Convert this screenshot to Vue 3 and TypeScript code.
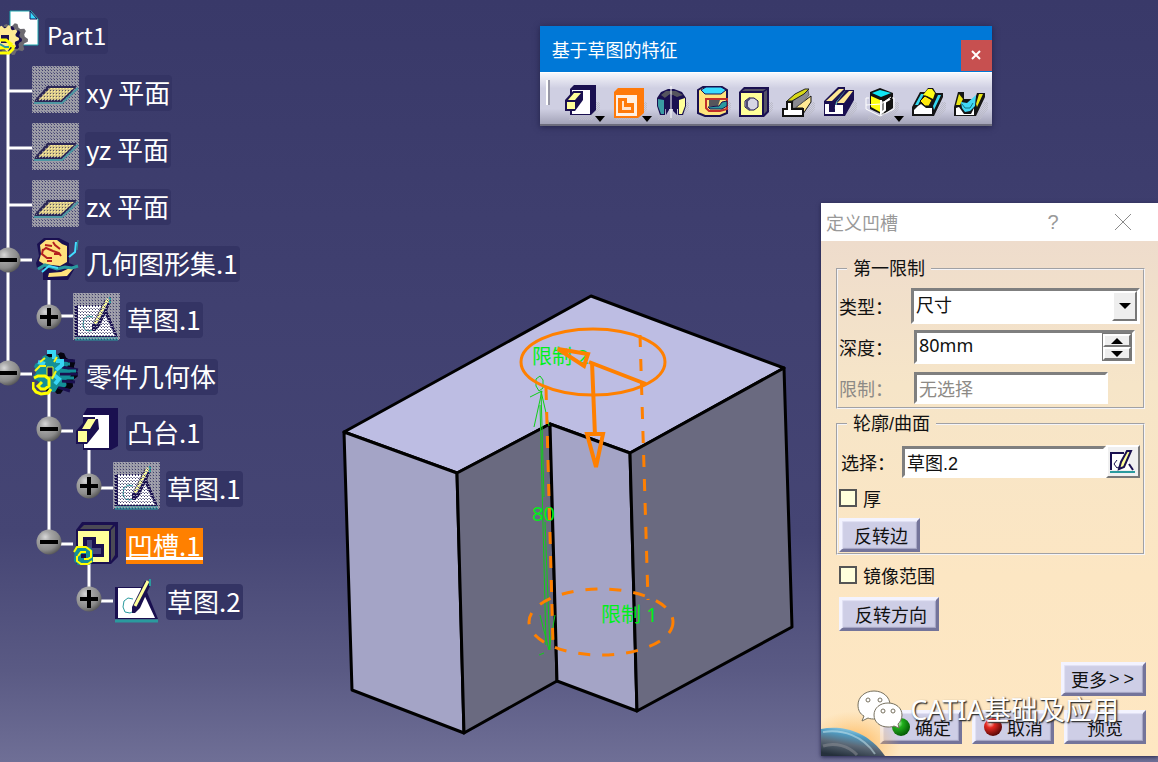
<script setup lang="ts">
import { ref } from 'vue'

interface Shape {
  d: string
  f?: string
  s?: string
  w?: number
}
interface TreeRow {
  label: string
  icon: string
  level: number
  toggle?: 'plus' | 'minus'
  selected?: boolean
  root?: boolean
}
interface Tool {
  name: string
  icon: string
  menu?: boolean
}

const navy = '#1a1050'
const lemon = '#ffff99'
const teal = '#2a9a9e'

const gear = (cx: number, cy: number, outer: number, inner: number, teeth: number): string => {
  const pts: string[] = []
  for (let i = 0; i < teeth * 4; i++) {
    const a = (i / (teeth * 4)) * Math.PI * 2
    const r = i % 4 < 2 ? outer : inner
    pts.push(`${(cx + Math.cos(a) * r).toFixed(1)} ${(cy + Math.sin(a) * r).toFixed(1)}`)
  }
  return `M${pts.join('L')}Z`
}

const plane: Shape[] = [
  { d: 'M0 0H47V47H0Z', f: 'url(#mesh)' },
  { d: 'M3 34L15 20H45L31 37H2Z', f: 'url(#dusk)' },
  { d: 'M6 34H29L42 22H18Z', f: 'url(#sand)' },
  { d: 'M2 37H30L46 22', s: '#4d97a3', w: 2 },
]
const sketch: Shape[] = [
  { d: 'M2 12H32L45 44H2Z', f: navy },
  { d: 'M5 13H28L42 43H5Z', f: '#fff' },
  { d: 'M2 46H45', s: teal, w: 3 },
  { d: 'M20 24L15 23L11 26L10 32L12 37L17 38L21 36', s: teal, w: 1 },
  { d: 'M32 6H37V11L27 33L22 38H19V32Z', f: navy },
  { d: 'M35 6L22 31', s: lemon, w: 3 },
  { d: 'M37 4V11', s: teal, w: 2 },
]

const treeIcons: Record<string, Shape[]> = {
  part: [
    { d: 'M10 2H31L38 10V36H10Z', f: '#fff', s: '#1aa5ad', w: 1 },
    { d: 'M30 2L37 10H30Z', f: '#35dcff', s: navy, w: 1 },
    { d: gear(12, 30, 16, 13, 9), f: '#6c6a70' },
    { d: gear(9, 30, 13, 11, 9), f: navy },
    { d: gear(6, 29, 13, 10, 9), f: '#ffe994' },
    { d: 'M1 26H9V34H1Z', f: navy },
    { d: 'M-2 31H6L11 35L8 39H-2M0 44H9L13 40V36', s: '#ffff00', w: 3 },
    { d: 'M0 35L5 38H9', s: teal, w: 2 },
  ],
  plane,
  set: [
    { d: 'M5 8L12 2H27L37 7L37 27L44 30L36 44H11V32H5L4 27L7 20Z', f: navy },
    { d: 'M8 9L14 4H25L30 8L35 10V26L28 30L12 28L7 25L9 18Z', f: '#ffe17c' },
    { d: 'M10 15L14 12L21 15L27 17L29 20M21 6L23 9L28 13M11 13L10 18L15 22H20M22 18H28M13 9L20 10M15 25H20', s: '#b32020', w: 2 },
    { d: 'M16 41L17 37L29 36L40 31L41 33L35 40Z', f: '#ffe17c' },
    { d: 'M6 33L13 29L25 33L33 31L40 32L46 30', s: teal, w: 3 },
    { d: 'M10 36L17 30L26 32M44 6L43 16L37 21', s: '#42dcff', w: 2 },
    { d: 'M46 4L45 14', s: teal, w: 1 },
  ],
  body: [
    { d: gear(25, 24, 21, 18, 9), f: '#050510' },
    { d: gear(20, 24, 19, 16, 9), f: '#138f98' },
    { d: 'M30 11L43 12M30 18L46 21M30 32L43 33M26 38L38 42M28 25H46', s: navy, w: 3 },
    { d: 'M27 15H38M28 22H44M27 29H42M24 36H34', s: '#138f98', w: 3 },
    { d: 'M15 3H22V10M6 13L13 15M24 12H30V16L24 21M22 26L27 30L23 35', s: '#39d5f5', w: 4 },
    { d: 'M15 18H21V28H15Z', f: navy, s: '#eaf21a', w: 1 },
    { d: 'M8 13L13 9M25 8L22 13M3 22L8 17H14M24 22L20 30', s: '#f5f51b', w: 2 },
    { d: 'M2 29L6 27H13L17 30V37L13 40H9L6 37L10 33M1 33V39L4 43L9 45L16 44L19 40', s: '#ffff00', w: 3 },
  ],
  pad: [
    { d: 'M10 10L14 3H45V41L38 45H10V39H3V26L10 18Z', f: navy },
    { d: 'M10 10H36V43H11V35L22 24V12H10Z', f: '#fff' },
    { d: 'M8 26L15 14H25L26 24L14 39H3V26Z', f: navy },
    { d: 'M9 24L15 14H23L17 24Z', f: lemon },
    { d: 'M5 26H14V37H5Z', f: lemon },
  ],
  pocket: [
    { d: 'M3 12L9 4H45V39L38 46H3Z', f: navy },
    { d: 'M7 11L11 7H40L37 11ZM38 12L42 8V37L38 43Z', f: '#4b4a55' },
    { d: 'M5 13H36V44H5Z', f: lemon },
    { d: 'M10 19H23V26H31V39H10Z', f: navy },
    { d: 'M14 22H19V30H28V36H14Z', f: '#47477a' },
    { d: 'M2 29H17L20 33V44L16 47H5L1 43Z', f: '#138f98' },
    { d: 'M8 36H13V40H8Z', f: navy },
    { d: 'M1 34L4 29H13L18 33V39L15 41H11M4 38V43L8 46H15L19 43M5 38L8 34H13', s: '#ffff00', w: 2 },
  ],
  sketch,
  ghost: [{ d: 'M0 0H47V47H0Z', f: 'url(#mesh)' }, ...sketch, { d: 'M0 0H47V47H0Z', f: 'url(#veil)' }],
}

const toolIcons: Record<string, Shape[]> = {
  pad: [
    { d: 'M10 9L14 5H36V30L31 35H10Z', f: navy },
    { d: 'M12 10H30V34H12Z', f: '#fff' },
    { d: 'M5 20L13 11H23V20L15 31H5Z', f: navy },
    { d: 'M8 20L14 13H21L15 20Z', f: lemon },
    { d: 'M7 22H15V29H7Z', f: lemon },
  ],
  pocket: [
    { d: 'M7 12L11 8H37V33L31 38H7Z', f: '#ff7a0a' },
    { d: 'M9 15H30V36H9Z', f: '#fff0e4' },
    { d: 'M11 18H20V23H27V33H11Z', f: '#ff7a0a' },
    { d: 'M15 21H17V27H24V30H15Z', f: '#ffe4cf' },
  ],
  shaft: [
    { d: 'M8 18L12 12L19 9H25L33 12L37 18V26L34 35H29V29H16V35H11L8 26Z', f: navy },
    { d: 'M12 15L17 11H27L34 15L28 17L21 14L16 18Z', f: '#55545e' },
    { d: 'M9 19L15 20V34H12L9 26Z', f: '#3a9ba3' },
    { d: 'M30 20L36 18V26L33 34H30Z', f: lemon },
    { d: 'M16 18L20 15V30L17 35ZM24 15L28 18V35L24 31Z', f: navy },
    { d: 'M20 20H24M20 25H24', s: navy, w: 2 },
    { d: 'M22 6V38', s: '#fff', w: 1 },
  ],
  groove: [
    { d: 'M7 10L12 7H31L36 10V19H16V28H36V33L29 36H14L7 33Z', f: '#ffe47c', s: navy, w: 2 },
    { d: 'M10 10L15 7H30L35 10L30 14H14Z', f: '#39dcff', s: navy, w: 1 },
    { d: 'M15 19H36V29L29 31H18L15 28Z', f: '#ffe47c', s: '#c22f2a', w: 2 },
    { d: 'M18 20H29L27 26H18Z', f: '#56565c' },
    { d: 'M17 27L28 26L31 22L36 21V26L31 29H19Z', f: teal, s: navy, w: 1 },
  ],
  hole: [
    { d: 'M6 12L11 7H36V32L31 37H6Z', f: navy },
    { d: 'M9 11L12 9H33L30 11ZM31 12L34 10V31L31 34Z', f: '#555266' },
    { d: 'M8 13H29V35H8Z', f: lemon },
    { d: 'M16 18H21L25 21V27L21 30H16L12 27V21Z', f: '#d6d6e4', s: navy, w: 1 },
    { d: 'M17 18L14 21V27L17 30', s: '#4f4c73', w: 2 },
  ],
  rib: [
    { d: 'M20 28L36 16V22L28 34V28Z', f: '#ffe994', s: '#111', w: 1 },
    { d: 'M18 21L33 10L34 15L29 21L20 28H17Z', f: '#8a8a91', s: '#666', w: 1 },
    { d: 'M8 29H12V22H17V29H28V36H8Z', f: '#fff', s: '#111', w: 2 },
    { d: 'M12 21L20 14L30 9H34L29 14L17 21Z', f: '#d8d818', s: '#222', w: 1 },
  ],
  slot: [
    { d: 'M7 21L21 7H28V10H37V20L28 36H7Z', f: navy },
    { d: 'M9 21L22 9H27L15 21Z', f: '#ffe994' },
    { d: 'M20 23L32 11H36L27 23Z', f: '#ffe994' },
    { d: 'M16 31V22L29 10L20 22V24Z', f: '#5bb2b4' },
    { d: 'M13 34V22L18 20L28 11L19 22L17 31Z', f: navy },
    { d: 'M8 24H12V34H8ZM18 25H26V34H12V32H18Z', f: '#fff' },
  ],
  solid: [
    { d: 'M11 12L21 8L34 13V28L24 35L11 29Z', f: '#111' },
    { d: 'M13 13L21 10L32 13L22 17Z', f: '#10e5f3' },
    { d: 'M12 16L21 20V32L12 27Z', f: '#ffff11' },
    { d: 'M10 18H7V29L21 36L35 29V18H33M7 25L22 24L32 17M22 24V36M24 21V34', s: '#fff', w: 1 },
    { d: 'M22 20V33L26 30V22L31 19', s: '#fff', w: 2 },
  ],
  multi: [
    { d: 'M6 27L14 12H19L22 8H27L30 13H37V17L28 36H6Z', f: '#151515' },
    { d: 'M9 25L15 14H18L12 25Z', f: '#35d8ef' },
    { d: 'M27 26L32 15H35L28 30Z', f: '#35d8ef' },
    { d: 'M8 34V30L12 26L15 24L20 28L26 28V34Z', f: '#fff' },
    { d: 'M17 15L22 9H26L29 13L27 19L21 16Z', f: '#ffff16' },
    { d: 'M14 21L19 16L26 20L23 26H19Z', f: '#ffe90d', s: '#111', w: 1 },
  ],
  removed: [
    { d: 'M6 27L10 12H16V19H27L29 13H37V17L28 36H6Z', f: '#151515' },
    { d: 'M8 25L11 14L15 19L12 25ZM28 24L31 14H35L29 27Z', f: '#e8e516' },
    { d: 'M8 28L11 27L16 34H23L26 28V35H8Z', f: '#fff' },
    { d: 'M13 22L19 23L28 15L27 26L22 31L17 32L14 28Z', f: '#41d8f5' },
    { d: 'M14 24L17 28H22L25 23', s: '#167783', w: 1 },
  ],
}

const rows: TreeRow[] = [
  { label: 'Part1', icon: 'part', level: 0, root: true },
  { label: 'xy 平面', icon: 'plane', level: 0 },
  { label: 'yz 平面', icon: 'plane', level: 0 },
  { label: 'zx 平面', icon: 'plane', level: 0 },
  { label: '几何图形集.1', icon: 'set', level: 0, toggle: 'minus' },
  { label: '草图.1', icon: 'ghost', level: 1, toggle: 'plus' },
  { label: '零件几何体', icon: 'body', level: 0, toggle: 'minus' },
  { label: '凸台.1', icon: 'pad', level: 1, toggle: 'minus' },
  { label: '草图.1', icon: 'ghost', level: 2, toggle: 'plus' },
  { label: '凹槽.1', icon: 'pocket', level: 1, toggle: 'minus', selected: true },
  { label: '草图.2', icon: 'sketch', level: 2, toggle: 'plus' },
]

const tools: Tool[] = [
  { name: '凸台', icon: 'pad', menu: true },
  { name: '凹槽', icon: 'pocket', menu: true },
  { name: '旋转体', icon: 'shaft' },
  { name: '旋转槽', icon: 'groove' },
  { name: '孔', icon: 'hole' },
  { name: '肋', icon: 'rib' },
  { name: '开槽', icon: 'slot' },
  { name: '加强肋', icon: 'solid', menu: true },
  { name: '多截面实体', icon: 'multi' },
  { name: '已移除的多截面实体', icon: 'removed' },
]

const limitType = ref('尺寸')
const depth = ref('80mm')
const profile = ref('草图.2')
const thick = ref(false)
const mirrored = ref(false)
</script>

<template>
  <main class="workspace">
    <svg class="scene" viewBox="0 0 1158 762" preserveAspectRatio="xMinYMin meet" aria-hidden="true">
      <g stroke="#000" stroke-width="3" stroke-linejoin="round">
        <path d="M344 432L591 296L784 368L630 453L550 424L457 473Z" fill="#bdbde3" />
        <path d="M344 432L457 473L464 733L352 690Z" fill="#a4a4c6" />
        <path d="M457 473L550 424L557 681L464 733Z" fill="#6a6a80" />
        <path d="M550 424L630 453L637 711L557 681Z" fill="#a4a4c6" />
        <path d="M630 453L784 368L792 627L637 711Z" fill="#6a6a80" />
      </g>
      <g class="note">
        <text x="532" y="364">限制 2</text>
        <text x="601" y="622">限制 1</text>
        <text x="532" y="521">80</text>
      </g>
      <g fill="none" stroke="#0fcf18" stroke-width="1">
        <path d="M541 391L544 497M545 522L550 650M530 397L542 391L534 427M541 391L549 426M540 405L546 645M540 615L549 650L555 615M539 655L544 653" />
        <path d="M536 386L536 379L540 376L543 380V388L539 391Z" />
      </g>
      <g fill="none" stroke="#ff8000" stroke-width="3">
        <ellipse cx="593" cy="362" rx="72" ry="33" />
        <ellipse cx="601" cy="622" rx="72" ry="33" stroke-dasharray="12 12" />
        <path d="M546 388L553 645M640 335L648 600" stroke-dasharray="12 12" />
        <path d="M592 362L595 436M589 362L646 384" stroke-width="4" />
        <path d="M587 434H603L596 467ZM558 349L588 354L584 366Z" stroke-width="4" />
      </g>
    </svg>

    <nav class="tree" aria-label="结构树">
      <svg class="branches" width="240" height="640" aria-hidden="true">
        <path
          d="M8 50V373M8 91H32M8 148H32M8 205H32M8 260H32M8 374H32M49 276V316H73M49 392V542M49 431H73M49 544H73M89 447V488H113M89 560V601H113"
          fill="none" stroke="#fff" stroke-width="3"
        />
      </svg>
      <ul>
        <li v-for="(row, i) in rows" :key="i" class="row" :class="[`level-${row.level}`, { open: row.toggle === 'minus', root: row.root }]">
          <button v-if="row.toggle" class="toggle" type="button" :aria-label="row.toggle === 'plus' ? '展开' : '折叠'">
            <svg width="26" height="26" viewBox="0 0 26 26">
              <circle cx="13" cy="13" r="12.5" fill="url(#ball)" />
              <path :d="row.toggle === 'plus' ? 'M4 13H22M13 4V22' : 'M4 13H22'" stroke="#000" stroke-width="4" />
            </svg>
          </button>
          <svg class="icon" :viewBox="row.root ? '0 0 45 48' : '0 0 48 48'" aria-hidden="true">
            <path v-for="(p, k) in treeIcons[row.icon]" :key="k" :d="p.d" :fill="p.f ?? 'none'" :stroke="p.s" :stroke-width="p.w" />
          </svg>
          <span class="label" :class="{ selected: row.selected }">{{ row.label }}</span>
        </li>
      </ul>
      <svg class="defs" width="0" height="0" aria-hidden="true">
        <defs>
          <pattern id="mesh" width="3" height="3" patternUnits="userSpaceOnUse">
            <rect width="3" height="3" fill="#9c9ca6" />
            <rect x="1" y="1" width="1" height="1" fill="#403e6c" />
            <rect width="1" height="1" fill="#64638a" />
          </pattern>
          <pattern id="dusk" width="3" height="3" patternUnits="userSpaceOnUse">
            <rect width="3" height="3" fill="#2b2755" />
            <rect x="1" y="1" width="1" height="1" fill="#7a7990" />
          </pattern>
          <pattern id="sand" width="3" height="3" patternUnits="userSpaceOnUse">
            <rect width="3" height="3" fill="#d9c98a" />
            <rect width="1" height="1" fill="#5b5563" />
            <rect x="1" y="1" width="1" height="1" fill="#fff2a0" />
          </pattern>
          <pattern id="veil" width="3" height="3" patternUnits="userSpaceOnUse">
            <rect x="1" y="1" width="1" height="1" fill="#403e6c" />
            <rect width="1" height="1" fill="#8887a0" />
            <rect x="2" width="1" height="1" fill="#a9a9b8" />
          </pattern>
          <radialGradient id="ball" cx="0.35" cy="0.3" r="0.75">
            <stop offset="0" stop-color="#d8d8d8" />
            <stop offset="0.3" stop-color="#a6a6a6" />
            <stop offset="0.7" stop-color="#8b8b8b" />
            <stop offset="1" stop-color="#555" />
          </radialGradient>
        </defs>
      </svg>
    </nav>

    <section class="toolbar" aria-label="基于草图的特征">
      <header class="toolbar-title">
        <h2>基于草图的特征</h2>
        <button class="close" type="button" aria-label="关闭">
          <svg width="10" height="10" viewBox="0 0 10 10"><path d="M1 1L9 9M9 1L1 9" stroke="#fff" stroke-width="2" /></svg>
        </button>
      </header>
      <div class="tools">
        <span class="grip"></span>
        <button v-for="tool in tools" :key="tool.icon" class="tool" :class="`tool-${tool.icon}`" type="button" :aria-label="tool.name">
          <svg width="42" height="42" viewBox="0 0 42 42">
            <path d="M9 36H28L36 22H40V29L32 40H9Z" fill="url(#shade)" />
            <path v-for="(p, k) in toolIcons[tool.icon]" :key="k" :d="p.d" :fill="p.f ?? 'none'" :stroke="p.s" :stroke-width="p.w" />
          </svg>
          <svg v-if="tool.menu" class="more" width="10" height="6" viewBox="0 0 10 6"><path d="M0 0H10L5 6Z" /></svg>
        </button>
      </div>
      <svg class="defs" width="0" height="0" aria-hidden="true">
        <pattern id="shade" width="2" height="2" patternUnits="userSpaceOnUse">
          <rect width="1" height="1" fill="#bcbcc9" />
          <rect x="1" y="1" width="1" height="1" fill="#bcbcc9" />
        </pattern>
      </svg>
    </section>

    <form class="dialog" aria-label="定义凹槽" @submit.prevent>
      <header class="dialog-title">
        <h2>定义凹槽</h2>
        <button type="button" aria-label="帮助">?</button>
        <button type="button" aria-label="关闭">
          <svg width="16" height="16" viewBox="0 0 16 16"><path d="M0 0L16 16M16 0L0 16" stroke="#8a8a8a" stroke-width="1" /></svg>
        </button>
      </header>
      <div class="dialog-body">
        <fieldset class="limits">
          <legend>第一限制</legend>
          <div class="field">
            <label for="type">类型：</label>
            <div class="combo">
              <select id="type" v-model="limitType">
                <option>尺寸</option>
              </select>
              <span class="drop"><svg width="12" height="6" viewBox="0 0 12 6"><path d="M0 0H12L6 6Z" /></svg></span>
            </div>
          </div>
          <div class="field spin-field">
            <label for="depth">深度：</label>
            <div class="spin">
              <input id="depth" v-model="depth" type="text" />
              <div class="steps">
                <button type="button" aria-label="增加"><svg width="12" height="6" viewBox="0 0 12 6"><path d="M0 6H12L6 0Z" /></svg></button>
                <button type="button" aria-label="减少"><svg width="12" height="6" viewBox="0 0 12 6"><path d="M0 0H12L6 6Z" /></svg></button>
              </div>
            </div>
          </div>
          <div class="field off">
            <label for="limit">限制：</label>
            <input id="limit" class="text" type="text" value="无选择" disabled />
          </div>
        </fieldset>

        <fieldset class="profile">
          <legend>轮廓/曲面</legend>
          <div class="field pick">
            <label for="profile">选择：</label>
            <input id="profile" v-model="profile" class="text" type="text" />
            <button class="sketcher" type="button" aria-label="草图编辑器">
              <svg width="28" height="26" viewBox="0 0 28 26">
                <path d="M3 3H15L24 21H3Z" fill="#fff" />
                <path d="M15 4H2V21M20 15L24 21" fill="none" stroke="#1a1050" stroke-width="2" />
                <path d="M1 23H26" stroke="#2a9a9e" stroke-width="2" />
                <path d="M8 11L5 15L8 19L12 17" fill="none" stroke="#1a1050" stroke-width="1" />
                <path d="M18 2H22L15 18L10 20L12 13Z" fill="#ffff99" stroke="#1a1050" stroke-width="2" />
              </svg>
            </button>
          </div>
          <label class="check"><input v-model="thick" type="checkbox" />厚</label>
          <button class="btn side" type="button">反转边</button>
        </fieldset>

        <label class="check mirror"><input v-model="mirrored" type="checkbox" />镜像范围</label>
        <button class="btn direction" type="button">反转方向</button>
        <button class="btn expand" type="button">更多<span class="chevrons"><span>&gt;</span><span>&gt;</span></span></button>
        <footer class="actions">
          <button class="btn" type="submit">
            <svg width="20" height="20" viewBox="0 0 20 20"><circle cx="10" cy="10" r="9" fill="url(#green)" /></svg>确定
          </button>
          <button class="btn" type="button">
            <svg width="20" height="20" viewBox="0 0 20 20"><circle cx="10" cy="10" r="9" fill="url(#red)" /></svg>取消
          </button>
          <button class="btn" type="button">预览</button>
        </footer>
      </div>
      <svg class="planet" width="80" height="56" viewBox="0 0 80 56" aria-hidden="true">
        <defs>
          <radialGradient id="green" cx="0.35" cy="0.3" r="0.7">
            <stop offset="0" stop-color="#c6ffc0" /><stop offset="0.35" stop-color="#20b01c" /><stop offset="1" stop-color="#045c04" />
          </radialGradient>
          <radialGradient id="red" cx="0.35" cy="0.3" r="0.7">
            <stop offset="0" stop-color="#ffd0c8" /><stop offset="0.35" stop-color="#e62a22" /><stop offset="1" stop-color="#5c0808" />
          </radialGradient>
          <radialGradient id="glow" cx="0.4" cy="0.8" r="0.6">
            <stop offset="0" stop-color="#ffa83c" stop-opacity="0.9" /><stop offset="1" stop-color="#ffc36e" stop-opacity="0" />
          </radialGradient>
          <linearGradient id="globe" x1="0.7" y1="0" x2="0.3" y2="1">
            <stop offset="0" stop-color="#b9e4f2" /><stop offset="0.3" stop-color="#4f9dc4" /><stop offset="0.6" stop-color="#5d6a78" /><stop offset="1" stop-color="#25303c" />
          </linearGradient>
        </defs>
        <rect width="80" height="56" fill="url(#glow)" />
        <path d="M0 29C20 25 46 30 64 56H0Z" fill="url(#globe)" />
        <path d="M2 32C22 29 42 36 54 54" fill="none" stroke="#cfe9f0" stroke-width="2" opacity="0.5" />
        <path d="M2 46C14 42 28 46 36 55" fill="none" stroke="#8f9297" stroke-width="3" opacity="0.5" />
      </svg>
    </form>

    <div class="watermark">
      <svg width="46" height="40" viewBox="0 0 46 40" aria-hidden="true">
        <path d="M17 1C8 1 1 7 1 15C1 20 3 24 7 26L5 31L11 28C13 29 16 29 18 29C29 29 33 22 33 15C33 7 26 1 17 1Z" fill="#fff" stroke="#77715f" stroke-width="1" />
        <path d="M31 13C23 13 17 18 17 25C17 32 23 37 31 37C33 37 35 37 37 36L42 38L41 34C43 32 45 29 45 25C45 18 39 13 31 13Z" fill="#fff" stroke="#77715f" stroke-width="1" />
        <g fill="#fff" stroke="#77715f"><circle cx="11" cy="10" r="2" /><circle cx="23" cy="10" r="2" /><circle cx="26" cy="21" r="2" /><circle cx="36" cy="21" r="2" /></g>
      </svg>
      <span>CATIA基础及应用</span>
    </div>
  </main>
</template>

<style>
body {
  margin: 0;
}
</style>

<style scoped>
* {
  box-sizing: border-box;
}
.workspace {
  position: relative;
  min-height: 100vh;
  overflow: hidden;
  background: linear-gradient(#393969 0%, #404070 40%, #454574 70%, #5a5a84 88%, #6f6f96 100%);
  font-family: "Liberation Sans", "Noto Sans CJK SC", sans-serif;
  font-size: 18px;
  color: #111;
}
button,
input,
select {
  font: inherit;
  color: inherit;
  border-radius: 0;
}
button {
  display: flex;
  align-items: center;
  justify-content: center;
  margin: 0;
  padding: 0;
  border: 0;
  background: none;
}
h2 {
  margin: 0;
  font-size: 18px;
  font-weight: 400;
}
.defs {
  position: absolute;
}
.scene {
  position: absolute;
  inset: 0;
  width: 100%;
}
.note {
  fill: #00f01a;
  font-family: "Noto Sans", "Noto Sans CJK SC", sans-serif;
  font-size: 20px;
}

/* specification tree */
.tree {
  position: relative;
  width: max-content;
  padding-top: 4px;
}
.branches {
  position: absolute;
  top: 0;
  left: 0;
}
.tree ul {
  position: relative;
  margin: 0;
  padding: 0;
  list-style: none;
}
.row {
  display: flex;
  align-items: center;
  height: 57px;
  padding-left: 32px;
}
.row.open {
  height: 56px;
}
.row.level-1 {
  padding-left: 73px;
}
.row.level-2 {
  padding-left: 113px;
}
.row.root {
  padding-left: 0;
}
.toggle {
  width: 26px;
  margin-left: -37px;
  margin-right: 11px;
}
.icon {
  width: 48px;
  height: 48px;
  margin-right: 5px;
}
.root .icon {
  width: 45px;
  margin-right: 0;
}
.label {
  height: 36px;
  margin-top: 7px;
  padding: 0 2px 0 1px;
  border-radius: 4px;
  background: #343464;
  color: #fff;
  font-family: "Noto Sans CJK SC", sans-serif;
  font-size: 26px;
  font-weight: 400;
  line-height: 34px;
  white-space: nowrap;
}
.root .label {
  padding-left: 2px;
  font-size: 24px;
}
.label.selected {
  border-radius: 0;
  background: linear-gradient(#ff8000 29px, #fff 29px, #fff 32px, #ff8000 32px);
}

/* floating toolbar */
.toolbar {
  position: absolute;
  top: 26px;
  left: 46.6%;
  width: 39.05%;
  min-width: 452px;
  box-shadow: 0 1px 6px #22224a;
}
.toolbar-title {
  display: flex;
  align-items: center;
  justify-content: space-between;
  height: 46px;
  padding-left: 12px;
  background: #0078d7;
  color: #fff;
}
.close {
  width: 31px;
  height: 31px;
  margin-top: 12px;
  background: #c75050;
}
.tools {
  display: flex;
  height: 54px;
  padding: 7px 0 0 6px;
  border-bottom: 2px solid #6c6c7c;
  border-top: 1px solid #fff;
  background: linear-gradient(#f6f6fb, #cfcfe2 30%, #cfcfe2 70%, #a3a3b8);
}
.grip {
  width: 4px;
  height: 25px;
  margin-right: 10px;
  border-left: 2px solid #fff;
  border-right: 2px solid #9999a8;
}
.tool {
  position: relative;
  width: 42px;
  height: 42px;
}
.tool-pad,
.tool-solid {
  margin-right: 5px;
}
.more {
  position: absolute;
  right: -3px;
  bottom: 0;
}

/* definition dialog */
.dialog {
  position: absolute;
  top: 203px;
  left: 70.9%;
  right: 0;
  min-width: 320px;
  box-shadow: 0 1px 4px #22224a;
}
.dialog-title {
  display: flex;
  align-items: center;
  height: 38px;
  padding: 0 27px 0 5px;
  background: #fff;
  color: #999;
}
.dialog-title h2 {
  flex: 1;
}
.dialog-title button {
  width: 16px;
  margin-left: 54px;
  font-size: 20px;
}
.dialog-body {
  display: flex;
  flex-direction: column;
  align-items: flex-start;
  padding: 18px 12px 12px 15px;
  background: linear-gradient(#eedccc, #f6e5c8 28%, #fce6c3 65%, #fee7c2);
}
fieldset {
  display: flex;
  flex-direction: column;
  align-self: stretch;
  min-width: 0;
  margin: 0 1px 0 0;
  border: 2px groove #f4f4f8;
}
legend {
  height: 20px;
  margin-left: 8px;
  padding: 0 6px;
  line-height: 20px;
}
.limits {
  gap: 5px;
  padding: 9px 3px 1px 1px;
}
.profile {
  align-items: flex-start;
  gap: 10px;
  margin-top: 5px;
  padding: 11px 3px 1px 1px;
}
.field {
  display: flex;
  align-items: center;
  align-self: stretch;
  height: 36px;
}
.field label {
  flex: none;
  width: 72px;
}
.combo,
.spin,
.text {
  flex: 1;
  min-width: 0;
  border: 3px solid;
  border-color: #7f7f7f #fff #fff #7f7f7f;
  background: #fff;
}
.combo {
  position: relative;
  height: 36px;
}
.combo select {
  width: 100%;
  height: 100%;
  padding: 0 30px 0 2px;
  border: 0;
  appearance: none;
  background: none;
}
.drop {
  position: absolute;
  top: 0;
  right: 0;
  bottom: 0;
  display: flex;
  align-items: center;
  justify-content: center;
  width: 25px;
  border: 2px solid;
  border-color: #fff #777 #777 #fff;
  background: #eee;
  pointer-events: none;
}
.spin-field {
  padding-right: 5px;
}
.spin {
  display: flex;
  height: 34px;
  margin-left: 3px;
}
.spin input {
  flex: 1;
  min-width: 0;
  padding: 0 2px 4px;
  border: 0;
  background: none;
  font-family: "Noto Sans", sans-serif;
}
.steps {
  display: grid;
  grid-template-rows: 1fr 1fr;
  width: 30px;
  border: 1px solid #777;
}
.steps button {
  border: 2px solid;
  border-color: #fff #777 #777 #fff;
  background: #eee;
}
.off {
  color: #8d8a86;
  padding-right: 32px;
}
.text {
  height: 32px;
  padding: 0 2px;
}
.off .text {
  margin-left: 3px;
}
.pick {
  height: 33px;
  padding-left: 2px;
}
.pick label {
  width: 61px;
}
.sketcher {
  width: 34px;
  height: 33px;
  border: 2px solid;
  border-color: #fff #777 #777 #fff;
  background: #f0f0f0;
}
.check {
  display: flex;
  align-items: center;
  gap: 6px;
  height: 20px;
}
.check input {
  appearance: none;
  width: 18px;
  height: 18px;
  margin: 0;
  border: 2px solid #555;
  background: #ffffdc;
}
.mirror {
  margin: 10px 0 12px 3px;
}
.btn {
  height: 34px;
  padding: 0 9px 0 13px;
  border: 3px solid;
  border-color: #f3f3ff #74749a #74749a #f3f3ff;
  background: #cecee6;
  box-shadow: inset 1px 1px 1px #e4e4f6, inset -1px -1px 1px #a2a2c0;
  white-space: nowrap;
}
.direction {
  margin-left: 3px;
}
.side {
  padding-left: 12px;
}
.expand {
  align-self: flex-end;
  margin-top: 31px;
  padding: 0 9px 0 7px;
}
.chevrons {
  display: flex;
  gap: 4px;
  margin-left: 2px;
}
.actions {
  display: flex;
  align-self: flex-end;
  gap: 10px;
  margin-top: 14px;
}
.actions .btn {
  width: 82px;
  gap: 4px;
  padding: 0;
}
.planet {
  position: absolute;
  left: 0;
  bottom: 0;
  pointer-events: none;
}

.watermark {
  position: absolute;
  top: 690px;
  right: 39px;
  display: flex;
  align-items: center;
  gap: 7px;
  color: #fff;
  font-family: "Noto Sans", "Noto Sans CJK SC", sans-serif;
  font-size: 27px;
  line-height: 40px;
  text-shadow: 1px 1px 1px #333, 1px 1px 2px #444;
  white-space: nowrap;
}
</style>
